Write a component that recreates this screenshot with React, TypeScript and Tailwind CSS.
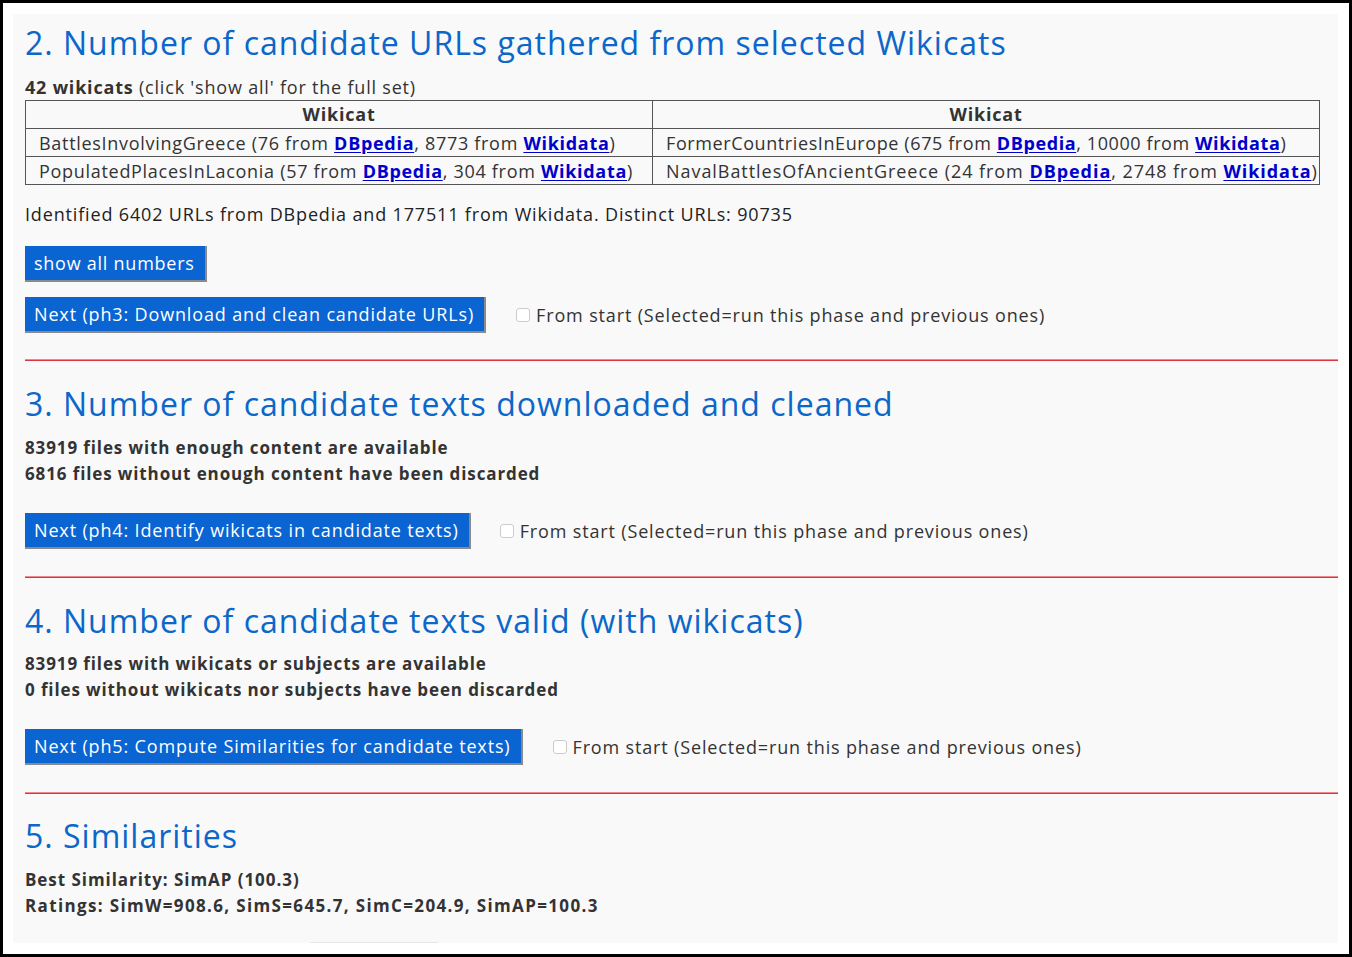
import React from "react";

const font = { fontFamily: '"Open Sans", "Liberation Sans", sans-serif' };

function Link({ children }: { children: React.ReactNode }) {
  return <a className="font-bold text-[#0000cc] underline underline-offset-2">{children}</a>;
}

function Cell({ name, a, b, track }: { name: string; a: string; b: string; track: string }) {
  return (
    <td className={`border border-[#555] px-[13px] h-[28px] leading-[26px] text-[18px] text-[#333] whitespace-nowrap overflow-visible ${track}`}>
      {name} ({a} from <Link>DBpedia</Link>, {b} from <Link>Wikidata</Link>)
    </td>
  );
}

function NextRow({ label, gap }: { label: string; gap: string }) {
  return (
    <div className="flex items-center">
      <button className="h-[36px] bg-[#0a64d2] text-white text-[18px] tracking-[0.85px] pl-[9px] pr-[10px] border-r-2 border-b-2 border-[#8a8a8a] leading-none whitespace-nowrap">
        {label}
      </button>
      <div className={`flex items-center ${gap}`}>
        <span className="inline-block w-[14px] h-[14px] rounded-[3px] border border-[#ccc] bg-white mr-[6px]" />
        <span className="text-[18px] tracking-[0.85px] text-[#333] whitespace-nowrap">From start (Selected=run this phase and previous ones)</span>
      </div>
    </div>
  );
}

function Heading({ children, className = "" }: { children: React.ReactNode; className?: string }) {
  return (
    <h2 className={`text-[32px] leading-[40px] font-medium tracking-[1px] text-[#0b67c9] whitespace-nowrap ${className}`}>{children}</h2>
  );
}

function Hr() {
  return <div className="h-[2px] bg-[#d9363e] border-t border-[#e88]" />;
}

export default function App() {
  return (
    <div style={font} className="w-[1352px] h-[957px] border-[3px] border-black bg-white pl-[10px] pt-[11px] pr-[11px] pb-[11px]">
      <div className="w-full h-full bg-[#f9f9f9] pl-[12px] pt-[9px] relative">
        <Heading>2. Number of candidate URLs gathered from selected Wikicats</Heading>
        <div className="mt-[12px] text-[18px] leading-[24px] tracking-[0.8px] text-[#333]">
          <b className="font-bold">42 wikicats</b> (click 'show all' for the full set)
        </div>
        <table className="mt-[1px] w-[1294px] border-collapse table-fixed">
          <colgroup>
            <col className="w-[627px]" />
            <col className="w-[667px]" />
          </colgroup>
          <thead>
            <tr>
              <th className="border border-[#555] h-[28px] text-[18px] tracking-[0.8px] font-bold text-[#333]">Wikicat</th>
              <th className="border border-[#555] h-[28px] text-[18px] tracking-[0.8px] font-bold text-[#333]">Wikicat</th>
            </tr>
          </thead>
          <tbody>
            <tr>
              <Cell name="BattlesInvolvingGreece" a="76" b="8773" track="tracking-[0.7px]" />
              <Cell name="FormerCountriesInEurope" a="675" b="10000" track="tracking-[0.6px]" />
            </tr>
            <tr>
              <Cell name="PopulatedPlacesInLaconia" a="57" b="304" track="tracking-[0.7px]" />
              <Cell name="NavalBattlesOfAncientGreece" a="24" b="2748" track="tracking-[0.95px]" />
            </tr>
          </tbody>
        </table>
        <div className="mt-[17px] text-[18px] leading-[24px] tracking-[0.84px] text-[#222]">
          Identified 6402 URLs from DBpedia and 177511 from Wikidata. Distinct URLs: 90735
        </div>
        <div className="mt-[20px]">
          <button className="h-[36px] bg-[#0a64d2] text-white text-[18px] tracking-[0.75px] pl-[9px] pr-[10px] border-r-2 border-b-2 border-[#8a8a8a] leading-none">
            show all numbers
          </button>
        </div>
        <div className="mt-[15px]">
          <NextRow label="Next (ph3: Download and clean candidate URLs)" gap="ml-[30px]" />
        </div>
        <div className="mt-[26px]">
          <Hr />
        </div>

        <Heading className="mt-[23px]">3. Number of candidate texts downloaded and cleaned</Heading>
        <div className="mt-[11px] text-[17px] leading-[26px] font-bold tracking-[0.88px] text-[#333]">
          <div>83919 files with enough content are available</div>
          <div>6816 files without enough content have been discarded</div>
        </div>
        <div className="mt-[26px]">
          <NextRow label="Next (ph4: Identify wikicats in candidate texts)" gap="ml-[29px]" />
        </div>
        <div className="mt-[27px]">
          <Hr />
        </div>

        <Heading className="mt-[23px]">4. Number of candidate texts valid (with wikicats)</Heading>
        <div className="mt-[10px] text-[17px] leading-[26px] font-bold tracking-[0.88px] text-[#333]">
          <div>83919 files with wikicats or subjects are available</div>
          <div>0 files without wikicats nor subjects have been discarded</div>
        </div>
        <div className="mt-[26px]">
          <NextRow label="Next (ph5: Compute Similarities for candidate texts)" gap="ml-[30px]" />
        </div>
        <div className="mt-[27px]">
          <Hr />
        </div>

        <Heading className="mt-[22px]">5. Similarities</Heading>
        <div className="mt-[11px] text-[17px] leading-[26px] font-bold text-[#333]">
          <div className="tracking-[0.95px]">Best Similarity: SimAP (100.3)</div>
          <div className="tracking-[1.35px]">Ratings: SimW=908.6, SimS=645.7, SimC=204.9, SimAP=100.3</div>
        </div>
        <div className="absolute bottom-0 left-[297px] w-[128px] h-px bg-[#e6e6e6]" />
      </div>
    </div>
  );
}
